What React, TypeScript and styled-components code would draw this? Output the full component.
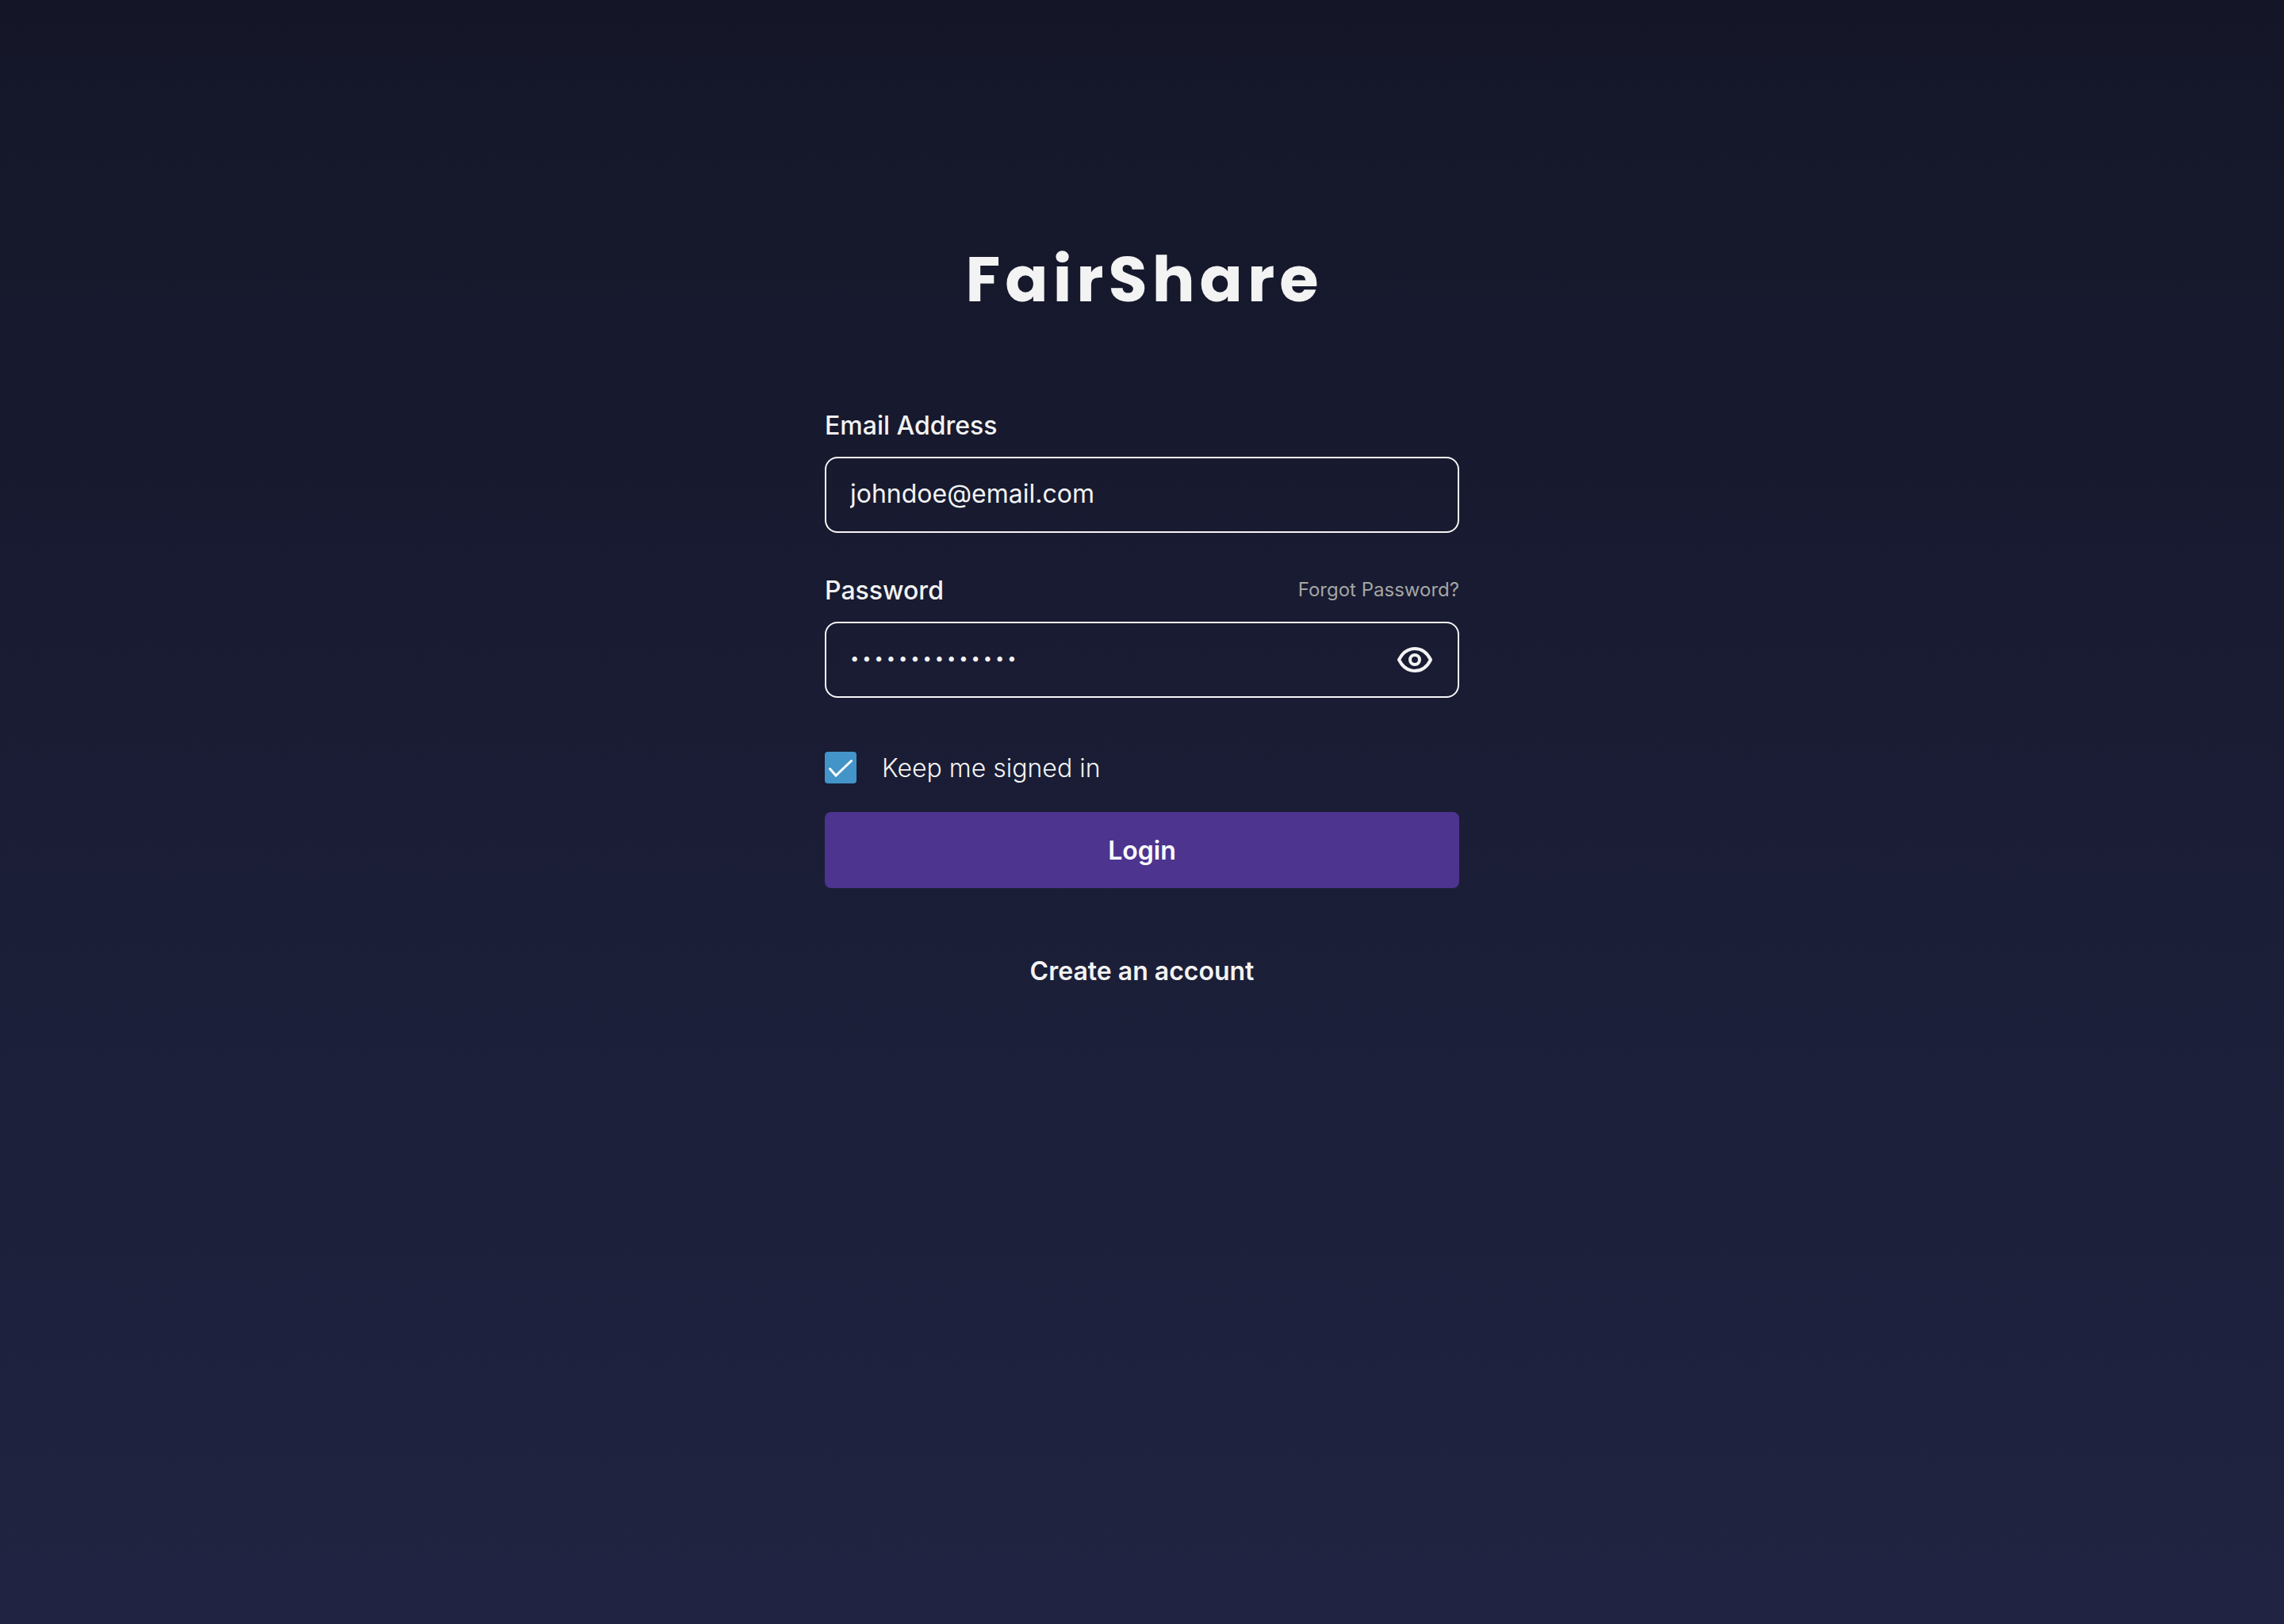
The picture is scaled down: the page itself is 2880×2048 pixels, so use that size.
import React, { useState } from "react";
import styled, { createGlobalStyle } from "styled-components";

const GlobalStyle = createGlobalStyle`
  * { box-sizing: border-box; }
  body { margin: 0; background: #20233f; }
`;

const Page = styled.main`
  min-height: 100vh;
  padding: 296px 32px 64px;
  display: flex;
  flex-direction: column;
  align-items: center;
  background: linear-gradient(180deg, #141628 0%, #202442 100%);
  color: #f3f3f3;
  font-family: Inter, "Liberation Sans", sans-serif;
`;

/* The left padding balances the letter-spacing after the last letter. */
const Brand = styled.h1`
  margin: 0 0 104px;
  padding-left: 6px;
  font-family: Poppins, Inter, sans-serif;
  font-size: 80px;
  line-height: 112px;
  font-weight: 700;
  letter-spacing: 6px;
`;

const Form = styled.form`
  width: 100%;
  max-width: 800px;
  display: flex;
  flex-direction: column;
`;

const Field = styled.div`
  display: flex;
  flex-direction: column;
  gap: 14px;
  margin-bottom: 48px;
`;

const FieldHead = styled.div`
  display: flex;
  align-items: flex-start;
  justify-content: space-between;
`;

const Label = styled.label`
  font-size: 32px;
  line-height: 50px;
  font-weight: 500;
`;

const ForgotLink = styled.a`
  font-size: 24px;
  line-height: 48px;
  color: #a5a5a5;
  text-decoration: none;
`;

const InputBox = styled.div`
  display: flex;
  align-items: center;
  height: 96px;
  padding: 0 30px;
  border: 2px solid #f6f6f6;
  border-radius: 16px;
`;

const TextInput = styled.input<{ $masked?: boolean }>`
  flex: 1;
  min-width: 0;
  height: 100%;
  padding: 0 0 4px;
  border: 0;
  outline: 0;
  background: transparent;
  color: #f3f3f3;
  font-family: inherit;
  font-size: ${(p) => (p.$masked ? "20px" : "32px")};
  letter-spacing: ${(p) => (p.$masked ? "4px" : "normal")};
  line-height: 48px;
`;

const IconButton = styled.button`
  display: flex;
  padding: 0;
  border: 0;
  background: transparent;
  color: #f3f3f3;
  cursor: pointer;
`;

const Keep = styled.label`
  display: flex;
  align-items: center;
  gap: 32px;
  height: 48px;
  margin: 16px 0 32px;
  font-size: 32px;
  line-height: 50px;
  font-weight: 300;
`;

const KeepText = styled.span`
  padding-top: 2px;
`;

const CheckSlot = styled.span`
  display: grid;
  width: 40px;
  height: 40px;

  > * { grid-area: 1 / 1; }
  > svg { pointer-events: none; }
  > input:not(:checked) + svg { visibility: hidden; }
`;

const Checkbox = styled.input`
  appearance: none;
  width: 40px;
  height: 40px;
  margin: 0;
  border-radius: 4px;
  background: #4394c8;
`;

const LoginButton = styled.button`
  height: 96px;
  padding: 2px 0 0;
  border: 0;
  border-radius: 8px;
  background: #4d348f;
  color: #ffffff;
  font-family: inherit;
  font-size: 32px;
  line-height: 50px;
  font-weight: 600;
  cursor: pointer;
`;

const CreateLink = styled.a`
  align-self: center;
  margin-top: 80px;
  color: #f3f3f3;
  font-size: 32px;
  line-height: 50px;
  font-weight: 600;
  text-decoration: none;
`;

const EyeIcon = () => (
  <svg width="48" height="48" viewBox="0 0 48 48" fill="none" stroke="currentColor" strokeWidth="4" strokeLinejoin="round" aria-hidden="true">
    <path d="M4 24C8 16 15 10 24 10s16 6 20 14c-4 8-11 14-20 14S8 32 4 24Z" />
    <circle cx="24" cy="24" r="6" />
  </svg>
);

const CheckIcon = () => (
  <svg width="40" height="40" viewBox="0 0 40 40" fill="none" stroke="#ffffff" strokeWidth="3" strokeLinecap="round" aria-hidden="true">
    <path d="M6.5 21.5L14 30L33.5 11.5" />
  </svg>
);

export default function App() {
  const [visible, setVisible] = useState(false);
  return (
    <Page>
      <GlobalStyle />
      <Brand>FairShare</Brand>
      <Form onSubmit={(e) => e.preventDefault()}>
        <Field>
          <FieldHead>
            <Label htmlFor="email">Email Address</Label>
          </FieldHead>
          <InputBox>
            <TextInput id="email" type="email" defaultValue="johndoe@email.com" />
          </InputBox>
        </Field>
        <Field>
          <FieldHead>
            <Label htmlFor="password">Password</Label>
            <ForgotLink href="#forgot">Forgot Password?</ForgotLink>
          </FieldHead>
          <InputBox>
            <TextInput
              id="password"
              type={visible ? "text" : "password"}
              $masked={!visible}
              defaultValue="fairshare-2024"
            />
            <IconButton type="button" aria-label="Show password" onClick={() => setVisible(!visible)}>
              <EyeIcon />
            </IconButton>
          </InputBox>
        </Field>
        <Keep>
          <CheckSlot>
            <Checkbox type="checkbox" defaultChecked />
            <CheckIcon />
          </CheckSlot>
          <KeepText>Keep me signed in</KeepText>
        </Keep>
        <LoginButton type="submit">Login</LoginButton>
        <CreateLink href="#signup">Create an account</CreateLink>
      </Form>
    </Page>
  );
}
